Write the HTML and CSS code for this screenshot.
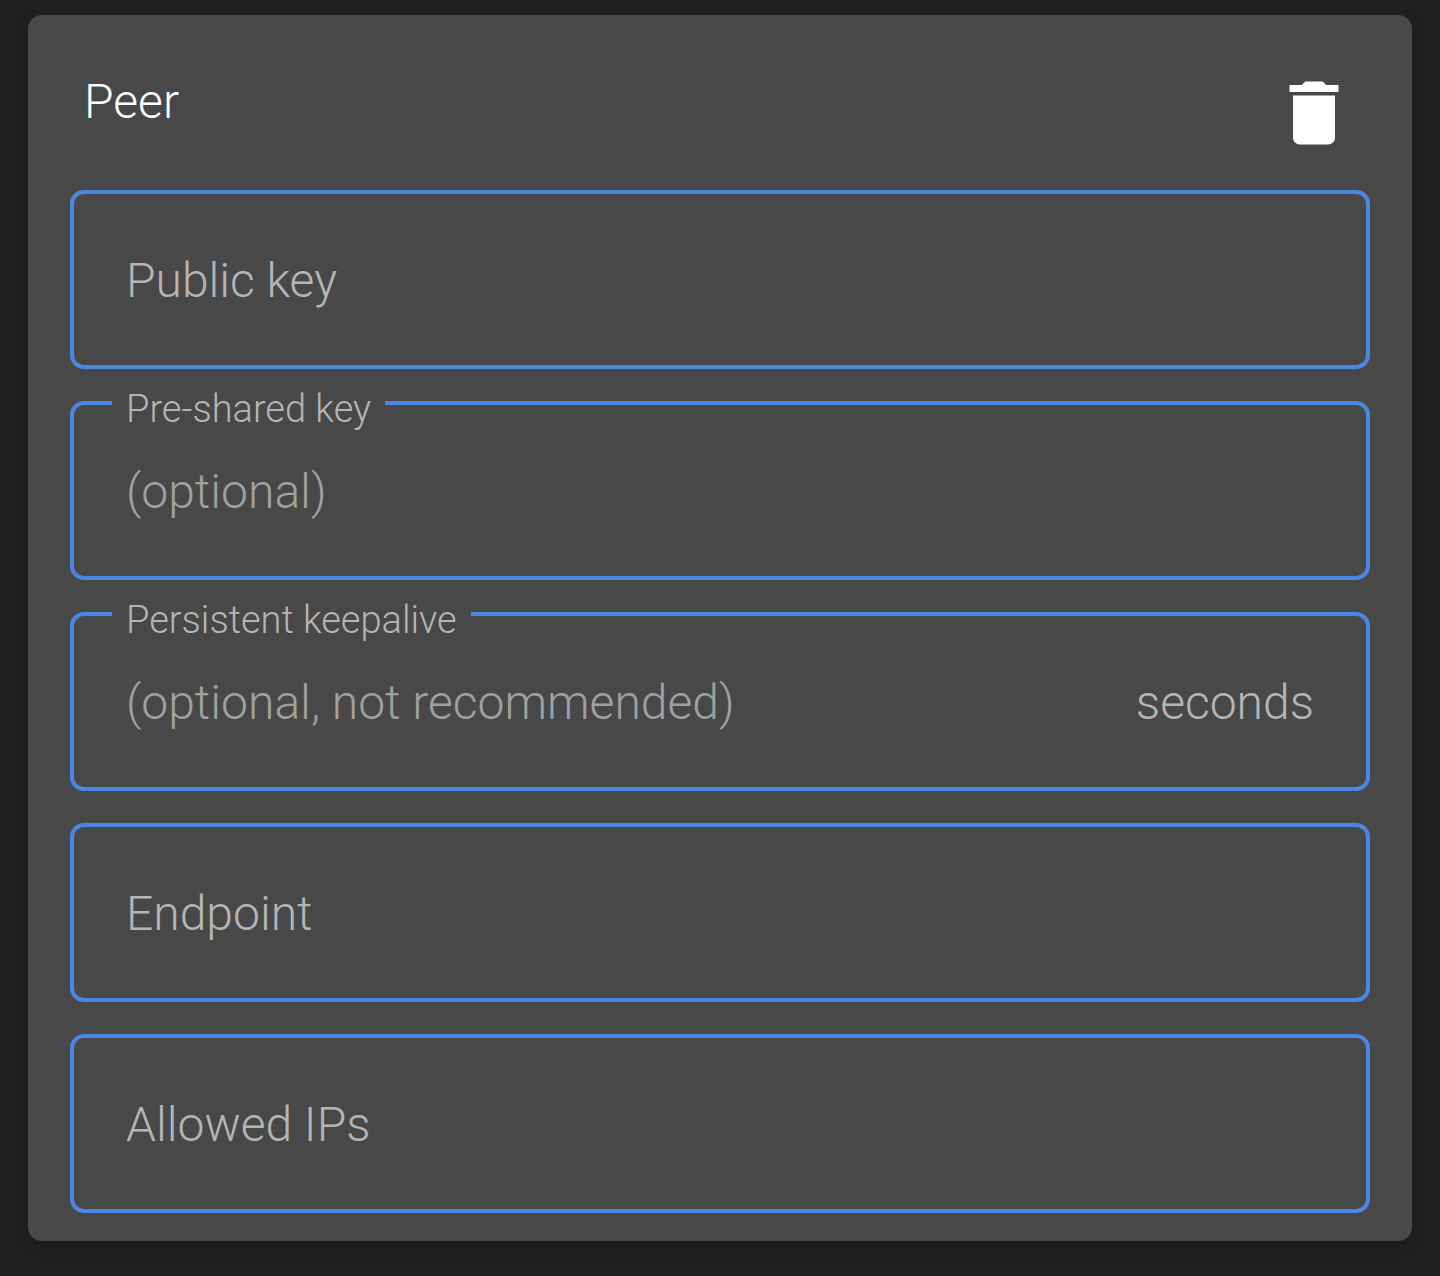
FILE: index.html
```html
<!DOCTYPE html>
<html lang="en">
<head>
  <meta charset="utf-8">
  <meta name="viewport" content="width=device-width, initial-scale=1">
  <title>Peer</title>
  <link rel="stylesheet" href="styles.css">
</head>
<body>
  <main class="card">
    <header class="card-header">
      <h1 class="card-title">Peer</h1>
      <button class="icon-button" type="button" aria-label="Delete peer">
        <svg class="icon" viewBox="0 0 24 24" aria-hidden="true">
          <path d="M6 19c0 1.1.9 2 2 2h8c1.1 0 2-.9 2-2V7H6v12zM19 4h-3.5l-1-1h-5l-1 1H5v2h14V4z"/>
        </svg>
      </button>
    </header>
    <form class="fields">
      <div class="field">
        <label class="label" for="public-key">Public key</label>
        <input class="input" id="public-key" type="text">
      </div>
      <div class="field">
        <label class="label label-floating" for="pre-shared-key">Pre-shared key</label>
        <input class="input" id="pre-shared-key" type="text" placeholder="(optional)">
      </div>
      <div class="field">
        <label class="label label-floating" for="keepalive">Persistent keepalive</label>
        <input class="input" id="keepalive" type="text" placeholder="(optional, not recommended)">
        <span class="suffix">seconds</span>
      </div>
      <div class="field">
        <label class="label" for="endpoint">Endpoint</label>
        <input class="input" id="endpoint" type="text">
      </div>
      <div class="field">
        <label class="label" for="allowed-ips">Allowed IPs</label>
        <input class="input" id="allowed-ips" type="text">
      </div>
    </form>
  </main>
</body>
</html>
```
FILE: styles.css
```css
* {
  box-sizing: border-box;
}

body {
  margin: 0;
  padding: 15px 28px 35px;
  background: #212121;
  font-family: Roboto, "Liberation Sans", sans-serif;
  font-size: 48px;
  font-weight: 300;
  line-height: 62px;
}

.card {
  padding: 56px 42px 28px;
  border-radius: 14px;
  background: #484848;
  box-shadow: 0 7px 14px rgba(0, 0, 0, 0.18), 0 0 28px rgba(0, 0, 0, 0.08);
}

.card-header {
  display: flex;
  justify-content: space-between;
  align-items: flex-start;
  padding: 0 14px;
  margin-bottom: 35px;
}

.card-title {
  margin: 0;
  color: #fff;
  font-size: 48px;
  font-weight: 300;
}

.icon-button {
  display: flex;
  padding: 0;
  border: 0;
  background: none;
  color: #fff;
  cursor: pointer;
}

.icon {
  width: 84px;
  height: 84px;
  fill: currentColor;
}

.fields {
  display: flex;
  flex-direction: column;
  gap: 32px;
}

.field {
  position: relative;
  display: flex;
  align-items: center;
  height: 179px;
  padding: 3px 52px 0;
  border: 4px solid #4c86e4;
  border-radius: 14px;
}

.label {
  position: absolute;
  left: 52px;
  color: #b5b5b5;
  pointer-events: none;
}

.label-floating {
  top: -18px;
  left: 38px;
  padding: 0 14px;
  background: #484848;
  font-size: 38px;
  line-height: 44px;
}

.input {
  flex: 1;
  min-width: 0;
  padding: 0;
  border: 0;
  outline: 0;
  background: none;
  color: #fff;
  font: inherit;
}

.input::placeholder {
  color: #a0a0a0;
  opacity: 1;
}

.suffix {
  color: #b5b5b5;
}
```
